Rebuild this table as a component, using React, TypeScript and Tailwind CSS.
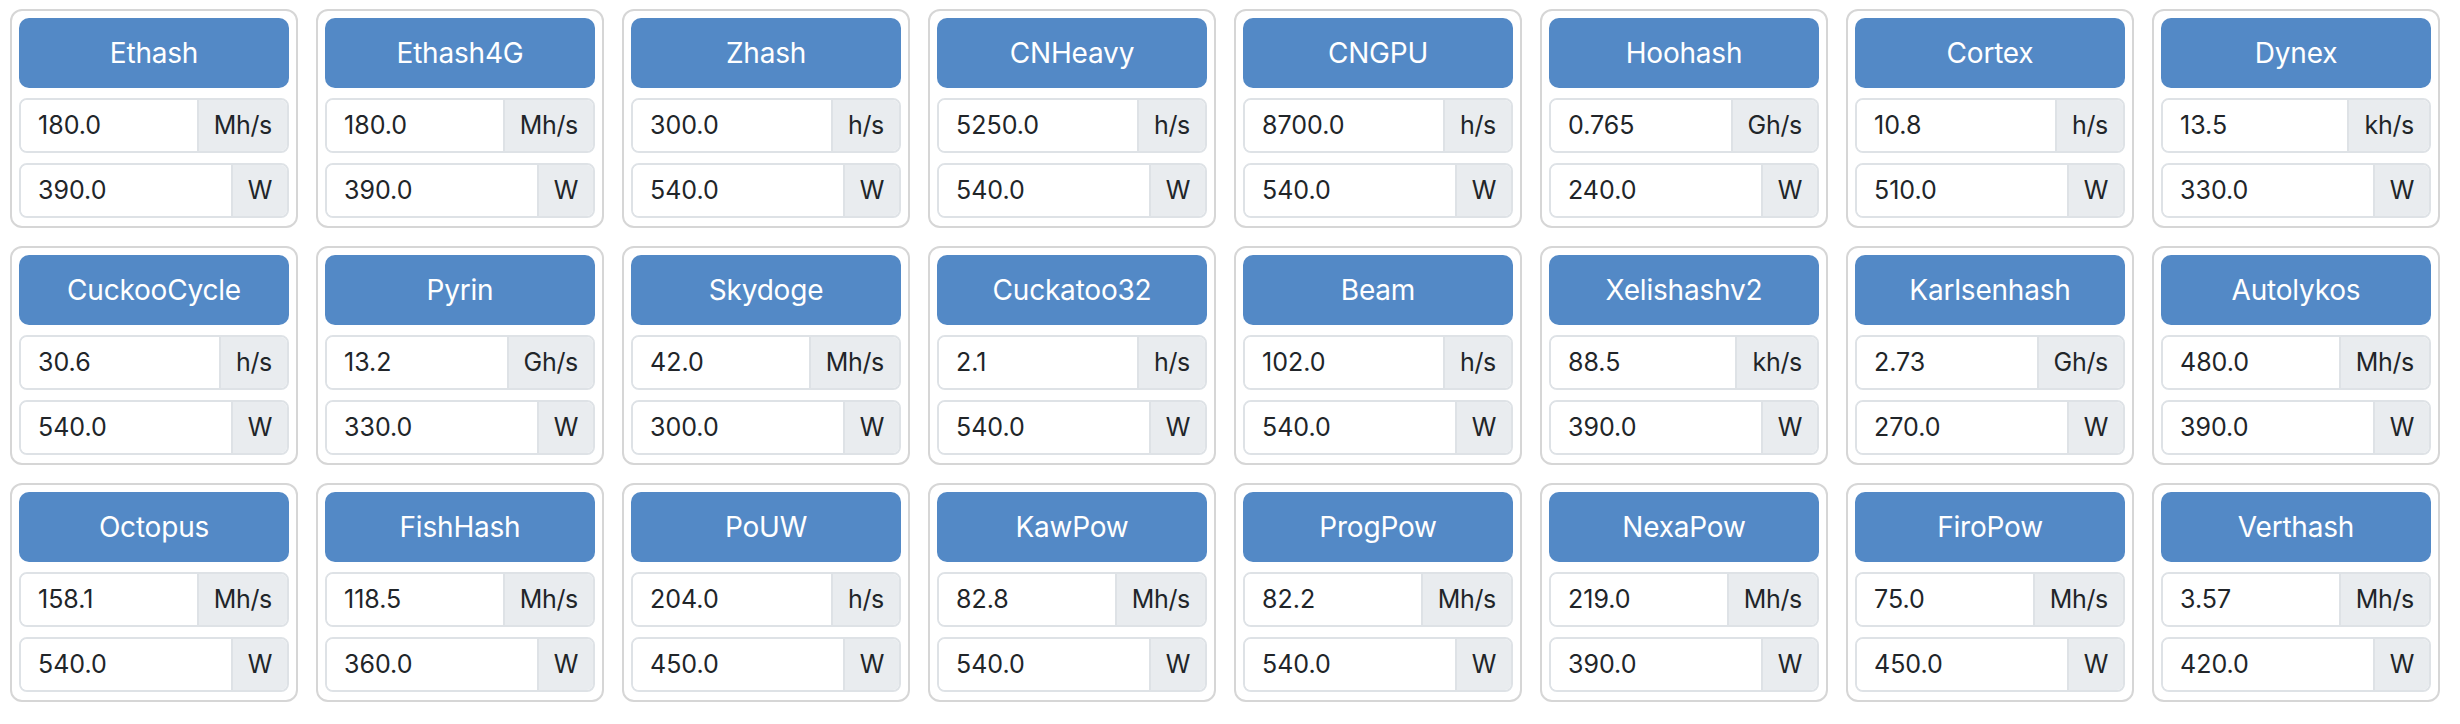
import React from 'react'

type Algo = { name: string; hash: string; unit: string; power: string }

const ALGOS: Algo[] = [
  { name: 'Ethash', hash: '180.0', unit: 'Mh/s', power: '390.0' },
  { name: 'Ethash4G', hash: '180.0', unit: 'Mh/s', power: '390.0' },
  { name: 'Zhash', hash: '300.0', unit: 'h/s', power: '540.0' },
  { name: 'CNHeavy', hash: '5250.0', unit: 'h/s', power: '540.0' },
  { name: 'CNGPU', hash: '8700.0', unit: 'h/s', power: '540.0' },
  { name: 'Hoohash', hash: '0.765', unit: 'Gh/s', power: '240.0' },
  { name: 'Cortex', hash: '10.8', unit: 'h/s', power: '510.0' },
  { name: 'Dynex', hash: '13.5', unit: 'kh/s', power: '330.0' },
  { name: 'CuckooCycle', hash: '30.6', unit: 'h/s', power: '540.0' },
  { name: 'Pyrin', hash: '13.2', unit: 'Gh/s', power: '330.0' },
  { name: 'Skydoge', hash: '42.0', unit: 'Mh/s', power: '300.0' },
  { name: 'Cuckatoo32', hash: '2.1', unit: 'h/s', power: '540.0' },
  { name: 'Beam', hash: '102.0', unit: 'h/s', power: '540.0' },
  { name: 'Xelishashv2', hash: '88.5', unit: 'kh/s', power: '390.0' },
  { name: 'Karlsenhash', hash: '2.73', unit: 'Gh/s', power: '270.0' },
  { name: 'Autolykos', hash: '480.0', unit: 'Mh/s', power: '390.0' },
  { name: 'Octopus', hash: '158.1', unit: 'Mh/s', power: '540.0' },
  { name: 'FishHash', hash: '118.5', unit: 'Mh/s', power: '360.0' },
  { name: 'PoUW', hash: '204.0', unit: 'h/s', power: '450.0' },
  { name: 'KawPow', hash: '82.8', unit: 'Mh/s', power: '540.0' },
  { name: 'ProgPow', hash: '82.2', unit: 'Mh/s', power: '540.0' },
  { name: 'NexaPow', hash: '219.0', unit: 'Mh/s', power: '390.0' },
  { name: 'FiroPow', hash: '75.0', unit: 'Mh/s', power: '450.0' },
  { name: 'Verthash', hash: '3.57', unit: 'Mh/s', power: '420.0' },
]

function Field({ value, unit }: { value: string; unit: string }) {
  return (
    <div className="flex h-[55px] rounded-[8px] border-2 border-[#dee2e6] overflow-hidden">
      <input
        defaultValue={value}
        className="flex-1 min-w-0 bg-white px-[17px] text-[25px] text-[#212529] outline-none"
      />
      <span className="flex items-center bg-[#e9ecef] border-l-2 border-[#dee2e6] px-[15px] text-[25px] tracking-[-0.3px] text-[#212529]">
        {unit}
      </span>
    </div>
  )
}

function AlgoCard({ algo }: { algo: Algo }) {
  return (
    <div className="flex flex-col gap-[10px] rounded-[12px] border-2 border-[#d6d6d6] bg-white px-[7px] pt-[7px] pb-[8px]">
      <button
        type="button"
        className="h-[70px] rounded-[10px] bg-[#5389c6] text-[28px] tracking-[-0.2px] text-white"
      >
        {algo.name}
      </button>
      <Field value={algo.hash} unit={algo.unit} />
      <Field value={algo.power} unit="W" />
    </div>
  )
}

export default function App() {
  return (
    <div
      className="min-h-screen bg-white pl-[10px] pt-[9px]"
      style={{ fontFamily: 'Inter, "Liberation Sans", sans-serif' }}
    >
      <div className="grid grid-cols-[repeat(8,288px)] gap-[18px]">
        {ALGOS.map((a) => (
          <AlgoCard key={a.name} algo={a} />
        ))}
      </div>
    </div>
  )
}
